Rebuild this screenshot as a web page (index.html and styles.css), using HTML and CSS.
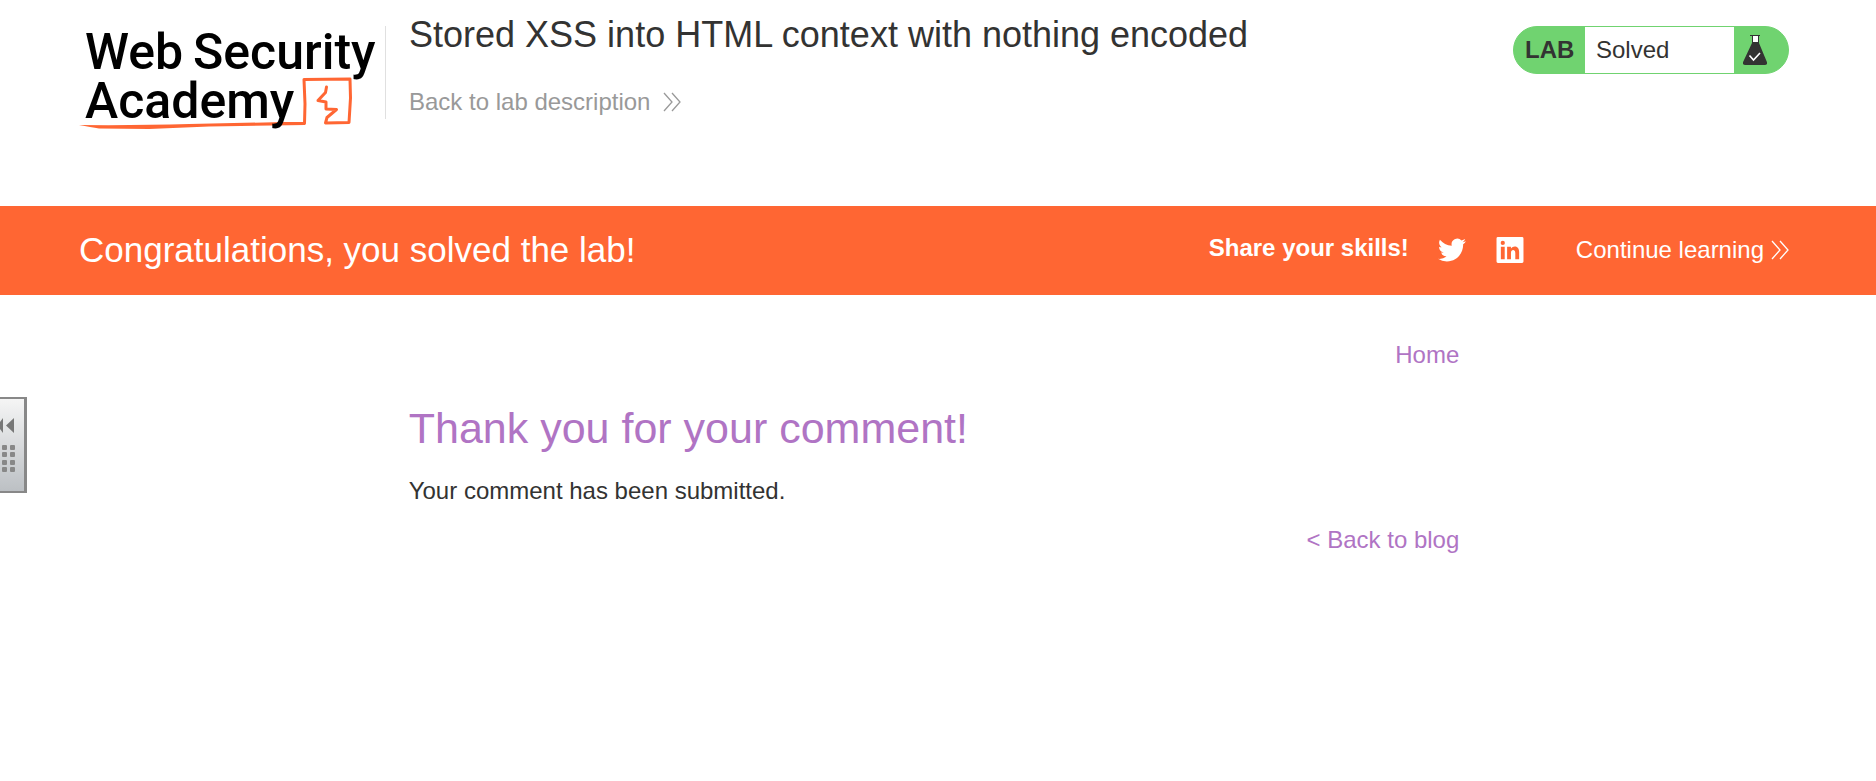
FILE: index.html
```html
<!DOCTYPE html>
<html lang="en">
<head>
<meta charset="utf-8">
<title>Stored XSS into HTML context with nothing encoded</title>
<link rel="stylesheet" href="styles.css">
</head>
<body>
<header class="header">
  <a class="logo" href="#" aria-label="Web Security Academy">
    <svg class="logo-art" viewBox="0 0 300 110" aria-hidden="true">
      <path class="logo-stroke" d="M200 101.500L225.500 101.500L226 82L225 57.500L271 57L271.500 76L270 100.500L246.500 101L248 95.500L257.500 87.500L247 87L247 80L239 78.500L246.500 70.500L247.500 65"/>
      <path class="logo-tail" d="M0 103Q60 103.500 110 102L205 100L226 100V103L130 104.500L70 107L20 106.500Q12 105 0 103Z"/>
      <text class="logo-text"><tspan x="6" y="47">Web</tspan><tspan x="114" y="47">Security</tspan><tspan x="6" y="96">Academy</tspan></text>
    </svg>
  </a>
  <div class="heading">
    <h2 class="title">Stored XSS into HTML context with nothing encoded</h2>
    <a class="back" href="#">Back to lab description
      <svg class="chevrons" viewBox="0 0 18 20" aria-hidden="true"><path d="M1 1L9 10L1 19M9 1L17 10L9 19"/></svg>
    </a>
  </div>
  <div class="status">
    <span class="status-label">LAB</span>
    <p class="status-text">Solved</p>
    <span class="status-icon">
      <svg class="flask" viewBox="0 0 24 30" aria-hidden="true">
        <path fill="#fff" d="M9 1H15V8H9Z"/>
        <path fill="#333332" d="M7 0H17V1H16V8L23.700 26.500Q25 30 21.500 30H2.500Q-1 30 .3 26.500L9 8V1H7ZM10 1V7H15V1Z"/>
        <path fill="none" stroke="#fff" stroke-width="1.600" d="M6.500 20.500L10.500 25L17 18"/>
      </svg>
    </span>
  </div>
</header>
<section class="banner">
  <h4 class="congrats">Congratulations, you solved the lab!</h4>
  <div class="banner-actions">
    <span class="share">Share your skills!</span>
    <a class="social" href="#" aria-label="Share on Twitter">
      <svg class="social-icon" viewBox="0 2 24 20" aria-hidden="true"><path d="M23.950 4.570a10 10 0 0 1-2.820.77 4.960 4.960 0 0 0 2.160-2.720c-.95.550-2 .95-3.130 1.180a4.920 4.920 0 0 0-8.380 4.480C7.690 8.100 4.070 6.130 1.640 3.160a4.820 4.820 0 0 0-.67 2.480c0 1.710.87 3.210 2.190 4.100a4.900 4.900 0 0 1-2.230-.62v.06a4.920 4.920 0 0 0 3.950 4.830 5 5 0 0 1-2.210.08 4.940 4.940 0 0 0 4.600 3.420A9.870 9.870 0 0 1 0 19.540a14 14 0 0 0 7.550 2.210c9.050 0 14-7.500 14-13.980 0-.21 0-.42-.02-.63a9.940 9.940 0 0 0 2.420-2.570z"/></svg>
    </a>
    <a class="social" href="#" aria-label="Share on LinkedIn">
      <svg class="social-icon" viewBox="0 0 28 27" aria-hidden="true"><path fill-rule="evenodd" d="M1.500 0H26.500Q28 0 28 1.500V25.500Q28 27 26.500 27H1.500Q0 27 0 25.500V1.500Q0 0 1.500 0ZM4.500 10V23H8.500V10ZM6.500 4A2.200 2.200 0 1 0 6.500 8.400A2.200 2.200 0 1 0 6.500 4ZM11 10V23H15V16.500C15 12.500 19.500 12.500 19.500 16.500V23H23.500V15.500C23.500 9 17.300 8.500 15 12V10Z"/></svg>
    </a>
    <a class="continue" href="#">Continue learning
      <svg class="chevrons" viewBox="0 0 18 20" aria-hidden="true"><path d="M1 1L9 10L1 19M9 1L17 10L9 19"/></svg>
    </a>
  </div>
</section>
<main class="content">
  <nav class="nav"><a class="link" href="#">Home</a></nav>
  <h1 class="thanks">Thank you for your comment!</h1>
  <p class="message">Your comment has been submitted.</p>
  <div class="nav"><a class="link" href="#">&lt; Back to blog</a></div>
</main>
<button class="drawer" type="button" aria-label="Open side panel">
  <svg class="drawer-art" viewBox="0 0 24 92" aria-hidden="true">
    <path fill="#777" d="M3 19V34L0 30V23ZM14 19V34L6 26.500Z"/>
    <g fill="#888">
      <rect x="2" y="46" width="5" height="5" rx="1"/><rect x="10" y="46" width="5" height="5" rx="1"/>
      <rect x="2" y="53" width="5" height="5" rx="1"/><rect x="10" y="53" width="5" height="5" rx="1"/>
      <rect x="2" y="61" width="5" height="5" rx="1"/><rect x="10" y="61" width="5" height="5" rx="1"/>
      <rect x="2" y="68" width="5" height="5" rx="1"/><rect x="10" y="68" width="5" height="5" rx="1"/>
    </g>
  </svg>
</button>
</body>
</html>
```
FILE: styles.css
```css
* { box-sizing: border-box; }

body {
  margin: 0;
  background: #fff;
  color: #333332;
  font: 24px/28px "Liberation Sans", Arial, sans-serif;
}

h1, h2, h4, p { margin: 0; font-weight: 400; }
a { color: inherit; text-decoration: none; }
svg { display: block; flex: none; }

.header {
  display: flex;
  align-items: flex-start;
  padding: 14px 87px 76px 79px;
}

.logo {
  margin-top: 12px;
  height: 93px;
  padding-right: 6px;
  border-right: 1px solid #e0e0e0;
}

.logo-art {
  width: 300px;
  height: 110px;
  margin-top: -4px;
}

.logo-text { font: 500 50px Roboto, sans-serif; fill: #000; }
.logo-stroke { fill: none; stroke: #ff6633; stroke-width: 3; stroke-linejoin: round; stroke-linecap: round; }
.logo-tail { fill: #ff6633; }

.heading {
  flex: 1;
  padding-left: 23px;
  min-height: 116px;
}

.title { font-size: 36px; line-height: 42px; }

.back {
  display: inline-flex;
  align-items: center;
  gap: 13px;
  margin-top: 32px;
  color: #999;
}

.chevrons {
  width: 18px;
  height: 20px;
  fill: none;
  stroke: currentColor;
  stroke-width: 1.3;
}

.status {
  display: flex;
  width: 276px;
  height: 48px;
  margin-top: 12px;
  border: 1px solid #70d370;
  border-radius: 24px;
  background: #70d370;
  line-height: 46px;
  overflow: hidden;
}

.status-label { width: 71px; padding-left: 11px; font-weight: 700; }
.status-text { flex: 1; padding-left: 11px; background: #fff; }
.status-icon { display: flex; width: 54px; padding: 8px 9px; }
.flask { width: 24px; height: 30px; }

.banner {
  display: flex;
  align-items: center;
  justify-content: space-between;
  min-height: 89px;
  padding: 0 87px 2px 79px;
  background: #ff6633;
  color: #fff;
}

.congrats { font-size: 35px; line-height: 42px; }
.banner-actions { display: flex; align-items: center; }
.share { margin-right: 29px; padding-bottom: 4px; font-weight: 700; }
.social { margin-right: 30px; }
.social-icon { width: 28px; height: 26px; fill: #fff; }
.continue { display: flex; align-items: center; gap: 7px; margin-left: 22px; }

.content {
  width: 56%;
  margin-left: calc(22% - 4px);
  padding-top: 46px;
}

.nav { display: flex; justify-content: flex-end; }
.link, .thanks { color: #b074c4; }
.thanks { margin-top: 34px; font-size: 43px; line-height: 50px; }
.message { margin: 24px 0 21px; }

.drawer {
  position: fixed;
  left: 0;
  top: 397px;
  width: 27px;
  height: 96px;
  padding: 0;
  border: 2px solid #888;
  border-left: 0;
  border-right-width: 3px;
  background: linear-gradient(#f5f5f5, #bcc0c4);
}

.drawer-art { width: 24px; height: 92px; }
```
